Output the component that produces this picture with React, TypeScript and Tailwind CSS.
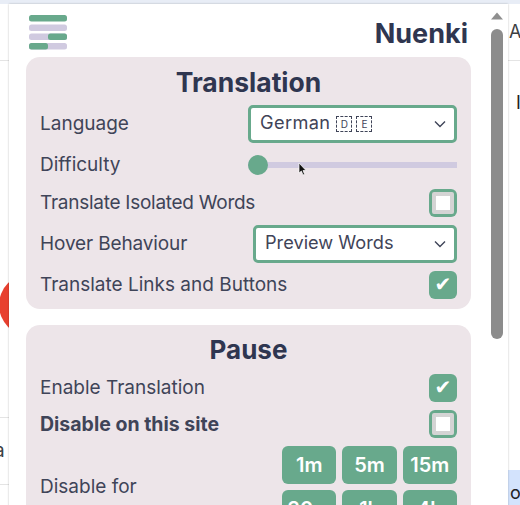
import React from "react";

const font = { fontFamily: '"Inter", "Noto Sans", sans-serif' };

function Row({ children, className = "" }: { children: React.ReactNode; className?: string }) {
  return <div className={`flex items-center justify-between pl-[14px] pr-[14px] ${className}`}>{children}</div>;
}

function Label({ children, bold, className = "" }: { children: React.ReactNode; bold?: boolean; className?: string }) {
  return (
    <span className={`text-[#3f4458] ${bold ? "text-[19.5px] font-bold leading-[24px]" : "text-[19px] font-normal leading-[24px]"} ${className}`}>
      {children}
    </span>
  );
}

function Checkbox({ checked }: { checked?: boolean }) {
  if (checked) {
    return (
      <div className="flex h-[28px] w-[28px] items-center justify-center rounded-[6px] bg-[#68a98c]">
        <span className="pb-[3px] font-['DejaVu_Sans'] text-[20px] font-bold leading-none text-white">✔</span>
      </div>
    );
  }
  return (
    <div className="flex h-[28px] w-[28px] items-center justify-center rounded-[6px] bg-[#68a98c] p-[3px]">
      <div className="h-full w-full rounded-[2px] border-[4px] border-[#d4d4d4] bg-white" />
    </div>
  );
}

function Select({ width, children }: { width: string; children: React.ReactNode }) {
  return (
    <div className={`flex h-[38px] items-center justify-between rounded-[5px] border-[3px] border-[#68a98c] bg-white pl-[9px] pr-[8px] ${width}`}>
      <span className="flex items-center pb-[2px] text-[18.2px] text-[#3f4458]">{children}</span>
      <svg width="12" height="8" viewBox="0 0 12 8" className="shrink-0">
        <path d="M1 1.5 L6 6.5 L11 1.5" fill="none" stroke="#3f4458" strokeWidth="1.4" />
      </svg>
    </div>
  );
}

function Tofu({ letter }: { letter: string }) {
  return (
    <span className="mr-[4px] mt-[2px] flex h-[16px] w-[16px] items-center justify-center border border-dashed border-[#3f4458] text-[10px] leading-none">
      {letter}
    </span>
  );
}

function Time({ children }: { children: React.ReactNode }) {
  return (
    <div className="flex h-[38px] items-center justify-center rounded-[6px] bg-[#68a98c] text-[20px] font-semibold text-white">
      {children}
    </div>
  );
}

function Logo() {
  return (
    <svg width="38" height="35" viewBox="0 0 38 35">
      <rect x="0" y="0" width="38" height="6.5" rx="2.5" fill="#68a98c" />
      <rect x="0" y="9.5" width="38" height="6.5" rx="2.5" fill="#d0cae0" />
      <rect x="0" y="18.5" width="38" height="6.5" rx="2.5" fill="#d0cae0" />
      <rect x="19" y="18.5" width="19" height="6.5" rx="2.5" fill="#68a98c" />
      <rect x="0" y="28" width="38" height="6.5" rx="2.5" fill="#d0cae0" />
      <rect x="0" y="28" width="19" height="6.5" rx="2.5" fill="#68a98c" />
    </svg>
  );
}

export default function App() {
  return (
    <div className="relative h-[505px] w-[520px] overflow-hidden bg-white" style={font}>
      {/* page behind the popup */}
      <div className="absolute left-0 right-0 top-0 h-[4px] bg-[#e8edf6]" />
      <div className="absolute left-0 top-[60px] h-px w-[9px] bg-[#e4e4e4]" />
      <div className="absolute right-0 top-[60px] h-px w-[12px] bg-[#e4e4e4]" />
      <div className="absolute left-0 top-[417px] h-px w-[9px] bg-[#e4e4e4]" />
      <div className="absolute left-0 top-[484px] h-px w-[9px] bg-[#e4e4e4]" />
      <div className="absolute left-[-1px] top-[274px] h-[62px] w-[62px] rounded-full bg-[#e8402f]" />
      <span className="absolute left-[-6px] top-[440px] text-[19px] leading-[22px] text-[#3c4043]">a</span>
      <span className="absolute left-[509px] top-[21px] text-[18px] leading-[22px] text-[#3c4043]">A</span>
      <span className="absolute left-[516px] top-[92px] text-[18px] leading-[22px] text-[#202124]">I</span>
      <div className="absolute left-[508px] top-[470px] h-[35px] w-[12px] bg-[#d3e3fd]" />
      <span className="absolute left-[510px] top-[482px] text-[18px] leading-[22px] text-[#202124]">o</span>

      {/* popup */}
      <div className="absolute left-[9px] top-[4px] flex h-[520px] w-[499px] bg-white shadow-[0_0_2px_rgba(0,0,0,0.25)]">
        <div className="w-[462px] shrink-0 pl-[17px]">
          <div className="flex h-[53px] items-start justify-between pr-[3px] pt-[11px]">
            <div className="pl-[3px]">
              <Logo />
            </div>
            <span className="pt-[2px] text-[27px] font-bold leading-[33px] text-[#2f3650]">Nuenki</span>
          </div>

          <section className="h-[252px] w-[445px] rounded-[14px] bg-[#ede5e9]">
            <h2 className="pt-[10px] text-center text-[26.5px] font-bold leading-[30px] text-[#2f3650]">Translation</h2>
            <Row className="mt-[8px] h-[38px]">
              <Label>Language</Label>
              <Select width="w-[209px]">
                <span className="mr-[6px] tracking-[0.02em]">German</span>
                <Tofu letter="D" />
                <Tofu letter="E" />
              </Select>
            </Row>
            <Row className="mt-[2px] h-[40px]">
              <Label>Difficulty</Label>
              <div className="relative flex h-[20px] w-[209px] items-center">
                <div className="h-[6px] w-full bg-[#d0cae0]" />
                <div className="absolute left-0 top-0 h-[20px] w-[20px] rounded-full bg-[#68a98c]" />
                <svg className="absolute left-[50px] top-[7px]" width="9" height="14" viewBox="0 0 9 14">
                  <path d="M1 1 L1 11 L3.4 9 L5 13 L6.6 12.3 L5 8.5 L8 8.5 Z" fill="#111" stroke="#fff" strokeWidth="0.7" />
                </svg>
              </div>
            </Row>
            <Row className="mt-[4px] h-[28px]">
              <Label className="tracking-[-0.014em]">Translate Isolated Words</Label>
              <Checkbox />
            </Row>
            <Row className="mt-[8px] h-[38px]">
              <Label className="tracking-[-0.007em]">Hover Behaviour</Label>
              <Select width="w-[204px]">Preview Words</Select>
            </Row>
            <Row className="mt-[8px] h-[28px]">
              <Label>Translate Links and Buttons</Label>
              <Checkbox checked />
            </Row>
          </section>

          <section className="mt-[16px] w-[445px] rounded-[14px] bg-[#ede5e9] pb-[14px]">
            <h2 className="pt-[10px] text-center text-[26px] font-bold leading-[30px] text-[#2f3650]">Pause</h2>
            <Row className="mt-[9px] h-[28px]">
              <Label>Enable Translation</Label>
              <Checkbox checked />
            </Row>
            <Row className="mt-[8px] h-[28px]">
              <Label bold>Disable on this site</Label>
              <Checkbox />
            </Row>
            <Row className="mt-[8px]">
              <Label>Disable for</Label>
              <div className="grid w-[175px] grid-cols-3 gap-x-[6px] gap-y-[6px]">
                <Time>1m</Time>
                <Time>5m</Time>
                <Time>15m</Time>
                <Time>30m</Time>
                <Time>1h</Time>
                <Time>4h</Time>
              </div>
            </Row>
          </section>
        </div>

        {/* scrollbar */}
        <div className="relative ml-[20px] w-[12px]">
          <svg className="absolute left-0 top-[8px]" width="12" height="8" viewBox="0 0 12 8">
            <path d="M6 0.5 L12 7.5 L0 7.5 Z" fill="#8f8f8f" />
          </svg>
          <div className="absolute left-0 top-[25px] h-[310px] w-[12px] rounded-full bg-[#8c8c8c]" />
        </div>
      </div>
    </div>
  );
}
